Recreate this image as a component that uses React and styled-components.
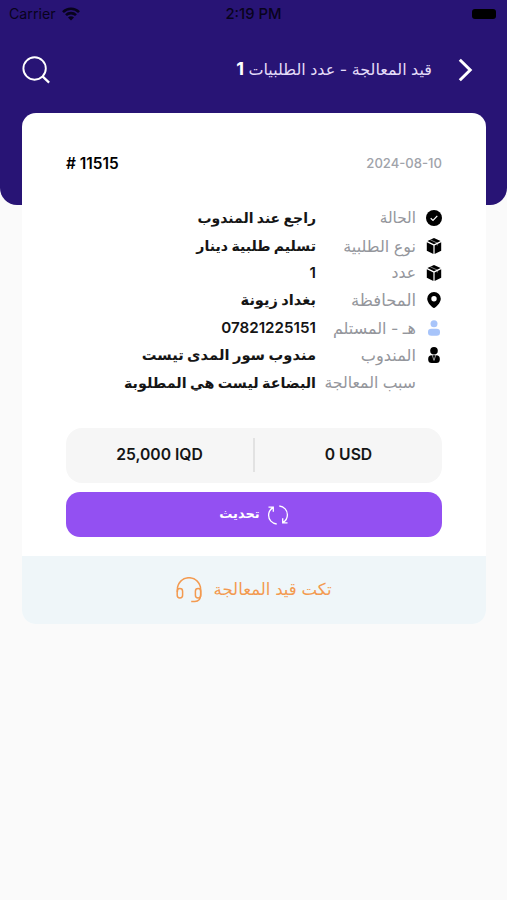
import styled, { createGlobalStyle } from "styled-components";

const GlobalStyle = createGlobalStyle`
  * {
    box-sizing: border-box;
  }
  body {
    margin: 0;
    background: #fafafa;
    font-family: Inter, 'DejaVu Sans', sans-serif;
  }
`

const Page = styled.div`
  position: relative;
  height: 900px;
  overflow: hidden;
  background: #fafafa;
`
const HeaderBg = styled.div`
  position: absolute;
  top: 0;
  left: 0;
  width: 100%;
  height: 205px;
  border-radius: 0 0 17px 17px;
  background: #281475;
`
const Content = styled.div`
  position: relative;
`
const StatusBar = styled.div`
  display: grid;
  grid-template-columns: 1fr auto 1fr;
  align-items: center;
  height: 28px;
  padding: 0 11px 0 9px;
  font-size: 14.2px;
  color: #08031c;
`
const Carrier = styled.div`
  display: flex;
  align-items: center;
  gap: 6px;
  padding-bottom: 1px;
`
const Clock = styled.div`
  padding-left: 2px;
  font-weight: 500;
  font-size: 14.8px;
`
const Battery = styled.div`
  justify-self: end;
  width: 24px;
  height: 10px;
  border-radius: 3px;
  background: #000;
`
const TitleBar = styled.header`
  display: flex;
  direction: rtl;
  align-items: center;
  height: 85px;
  padding: 0 34px 2px 21px;
  color: #fff;
`
const Title = styled.h1`
  flex: 1;
  margin: 0 26px 0 0;
  padding-bottom: 3px;
  font-size: 16px;
  font-weight: 400;
  white-space: nowrap;
  color: #e4dcf8;

  b {
    font-size: 18px;
    color: #fff;
  }
`
const Card = styled.main`
  margin: 0 21px 0 22px;
  height: 511px;
  border-radius: 14px;
  overflow: hidden;
  background: #fff;
`
const CardBody = styled.div`
  height: 443px;
  padding: 38px 44px 0;
`
const CardTop = styled.div`
  display: flex;
  justify-content: space-between;
  align-items: center;
  height: 24px;
  font-size: 15.4px;
  font-weight: 600;
`
const OrderDate = styled.span`
  font-size: 13.1px;
  font-weight: 500;
  color: #a0a3aa;
`
const Details = styled.div`
  direction: rtl;
  margin-top: 29.5px;
`
const Row = styled.div`
  display: grid;
  grid-template-columns: 16px 92px 1fr;
  align-items: center;
  height: 27.4px;
  white-space: nowrap;
`
const IconBox = styled.span`
  display: flex;
  justify-content: center;
`
const Label = styled.span`
  margin-right: 10px;
  font-size: ${({ $size }) => $size}px;
  line-height: 20px;
  color: #94969c;
`
const Value = styled.span`
  margin-right: 18px;
  font-size: ${({ $size }) => $size}px;
  font-weight: ${({ $weight }) => $weight || 700};
  line-height: 20px;
  color: #151515;
`
const Amounts = styled.div`
  display: flex;
  align-items: center;
  height: 55px;
  margin-top: 31.5px;
  border-radius: 16px;
  background: #f6f6f6;
`
const Amount = styled.div`
  flex: 1;
  padding-bottom: 2px;
  text-align: center;
  font-size: 15.7px;
  font-weight: 600;
  color: #151515;
`
const Divider = styled.div`
  width: 2px;
  height: 34px;
  background: #e2e2e2;
`
const UpdateBtn = styled.button`
  display: flex;
  direction: rtl;
  justify-content: center;
  align-items: center;
  gap: 7px;
  width: 100%;
  height: 45px;
  margin-top: 9px;
  padding: 2px 0 0;
  border: none;
  border-radius: 14px;
  background: #9350f2;
  color: #fff;
  font-family: inherit;
  font-size: 13px;
  font-weight: 700;
`
const UpdateText = styled.span`
  padding-bottom: 5px;
`
const Ticket = styled.div`
  display: flex;
  direction: rtl;
  justify-content: center;
  align-items: center;
  gap: 11px;
  height: 68px;
  background: #eff6f9;
  color: #f39a50;
  font-size: 16.6px;
`
const TicketText = styled.span`
  padding-bottom: 3px;
`

const WifiIcon = () => (
  <svg width="18" height="14" viewBox="0 0 18 14" fill="none" stroke="currentColor" strokeWidth="2.6">
    <path d="M1 5.1a11.3 11.3 0 0 1 16 0" />
    <path d="M4 8.2a7.1 7.1 0 0 1 10 0" />
    <path d="M9 13.4 6 10.4a4.2 4.2 0 0 1 6 0z" fill="currentColor" stroke="none" />
  </svg>
)
const ChevronIcon = () => (
  <svg width="15" height="24" viewBox="0 0 15 24" fill="none" stroke="#fff" strokeWidth="3">
    <path d="M1.8 1.7 12.2 12 1.8 22.3" />
  </svg>
)
const SearchIcon = () => (
  <svg width="30" height="30" viewBox="0 0 30 30" fill="none" stroke="#fff" strokeWidth="1.9">
    <circle cx="13.6" cy="13.5" r="11.2" />
    <path d="m21.3 21.2 6.8 6.4" strokeWidth="2.3" />
  </svg>
)
const CheckIcon = () => (
  <svg width="16" height="16" viewBox="0 0 16 16">
    <circle cx="8" cy="8" r="8" />
    <path d="m4.7 8.2 2.3 2.2 4.3-4.6" fill="none" stroke="#fff" strokeWidth="1.2" />
  </svg>
)
const BoxIcon = () => (
  <svg width="16" height="16" viewBox="0 0 16 16">
    <path d="M8 0 14.6 3.1 8 6.3 1.4 3.1zM.8 4.2l6.6 3.2V16L.8 12.7zM15.2 4.2 8.6 7.4V16l6.600-3.300z" />
    <path d="m4.3 1.8 7 3.3v2.4" fill="none" stroke="#fff" strokeWidth=".5" />
  </svg>
)
const PinIcon = () => (
  <svg width="16" height="16" viewBox="0 0 16 16">
    <path fillRule="evenodd" d="M8 0a6.8 6.8 0 0 1 6.8 6.8C14.8 10.7 9.7 16 8 16S1.2 10.7 1.2 6.8A6.8 6.8 0 0 1 8 0zm0 4.100a2.700 2.700 0 1 0 0 5.400 2.700 2.700 0 0 0 0-5.400z" />
  </svg>
)
const UserIcon = () => (
  <svg width="16" height="16" viewBox="0 0 16 16" fill="#a7c4fa">
    <circle cx="8" cy="3.8" r="3.5" />
    <rect x="2" y="8.7" width="12" height="7" rx="3.3" />
  </svg>
)
const AgentIcon = () => (
  <svg width="16" height="16" viewBox="0 0 16 16">
    <circle cx="8" cy="3.8" r="3.8" />
    <rect x="2.2" y="8.3" width="11.6" height="7.7" rx="3.5" />
    <path d="M6.2 8 8 13.4 9.8 8" fill="none" stroke="#fff" strokeWidth=".6" />
  </svg>
)
const RefreshIcon = () => (
  <svg width="22" height="20" viewBox="0 0 22 20" fill="none" stroke="#fff" strokeWidth="1.3">
    <path d="M9.7 19C4.9 18.5 1.6 14.8 1.6 10.3c0-3.4 1.6-6 4.4-7.7M1.5 2.1h4.8v4.6" />
    <path d="M12.3 1c4.8.5 8.1 4.2 8.1 8.7 0 3.4-1.6 6-4.4 7.7M20.5 17.9h-4.8v-4.6" />
  </svg>
)
const HeadsetIcon = () => (
  <svg width="26" height="26" viewBox="0 0 26 26" fill="none" stroke="currentColor" strokeWidth="1.5">
    <path d="M1.4 15v-2.7a11.6 11.6 0 0 1 23.2 0V18c0 4.2-2.2 6.4-5.8 6.4h-3.6" />
    <rect x="1.2" y="11.5" width="5.4" height="9.5" rx="2.7" />
    <rect x="19.4" y="11.5" width="5.4" height="9.5" rx="2.7" />
  </svg>
)

const rows = [
  { label: 'الحالة', labelSize: 15.3, value: 'راجع عند المندوب', size: 14, icon: <CheckIcon /> },
  { label: 'نوع الطلبية', labelSize: 16, value: 'تسليم طلبية دينار', size: 14.1, icon: <BoxIcon /> },
  { label: 'عدد', labelSize: 15.7, value: '1', size: 15.2, weight: 600, icon: <BoxIcon /> },
  { label: 'المحافظة', labelSize: 16.5, value: 'بغداد زيونة', size: 14.6, icon: <PinIcon /> },
  { label: 'هـ - المستلم', labelSize: 16, value: '07821225151', size: 15.2, weight: 600, icon: <UserIcon /> },
  { label: 'المندوب', labelSize: 16.2, value: 'مندوب سور المدى تيست', size: 14.7, icon: <AgentIcon /> },
  { label: 'سبب المعالجة', labelSize: 15.7, value: 'البضاعة ليست هي المطلوبة', size: 14.3 },
]

const App = () => {
  return (
    <Page>
      <GlobalStyle />
      <HeaderBg />
      <Content>
        <StatusBar>
          <Carrier>Carrier <WifiIcon /></Carrier>
          <Clock>2:19 PM</Clock>
          <Battery />
        </StatusBar>
        <TitleBar>
          <ChevronIcon />
          <Title>قيد المعالجة - عدد الطلبيات <b>1</b></Title>
          <SearchIcon />
        </TitleBar>
        <Card>
          <CardBody>
            <CardTop>
              <span># 11515</span>
              <OrderDate>2024-08-10</OrderDate>
            </CardTop>
            <Details>
              {rows.map((row) => (
                <Row key={row.label}>
                  <IconBox>{row.icon}</IconBox>
                  <Label $size={row.labelSize}>{row.label}</Label>
                  <Value $size={row.size} $weight={row.weight}>{row.value}</Value>
                </Row>
              ))}
            </Details>
            <Amounts>
              <Amount>25,000 IQD</Amount>
              <Divider />
              <Amount>0 USD</Amount>
            </Amounts>
            <UpdateBtn>
              <RefreshIcon />
              <UpdateText>تحديث</UpdateText>
            </UpdateBtn>
          </CardBody>
          <Ticket>
            <TicketText>تكت قيد المعالجة</TicketText>
            <HeadsetIcon />
          </Ticket>
        </Card>
      </Content>
    </Page>
  )
}

export default App
